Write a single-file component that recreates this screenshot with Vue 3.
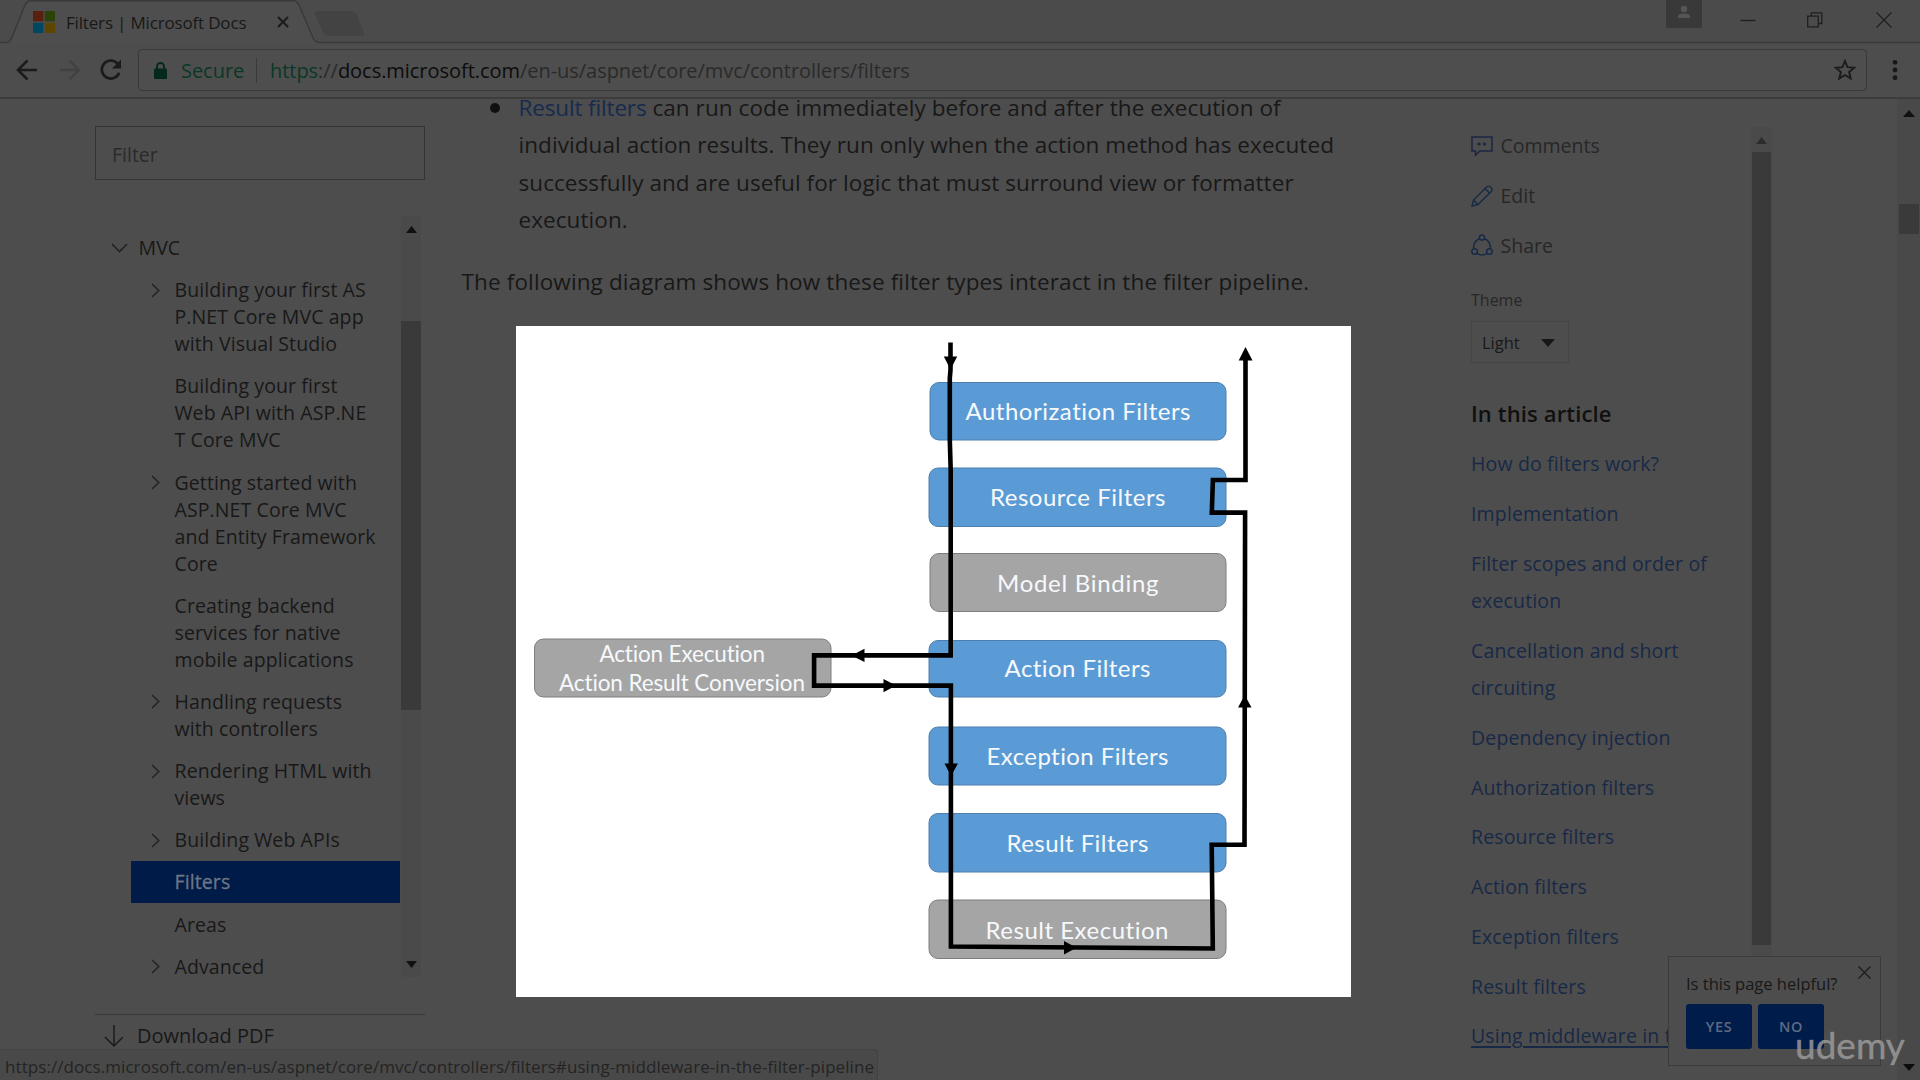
<script setup>
const tree = [
  { open: true, lines: ['Building your first AS', 'P.NET Core MVC app', 'with Visual Studio'] },
  { lines: ['Building your first', 'Web API with ASP.NE', 'T Core MVC'] },
  { open: true, lines: ['Getting started with', 'ASP.NET Core MVC', 'and Entity Framework', 'Core'] },
  { lines: ['Creating backend', 'services for native', 'mobile applications'] },
  { open: true, lines: ['Handling requests', 'with controllers'] },
  { open: true, lines: ['Rendering HTML with', 'views'] },
  { open: true, lines: ['Building Web APIs'] },
  { active: true, lines: ['Filters'] },
  { lines: ['Areas'] },
  { open: true, lines: ['Advanced'] },
]

const paragraph = [
  'individual action results. They run only when the action method has executed',
  'successfully and are useful for logic that must surround view or formatter',
  'execution.',
]

const toc = [
  ['How do filters work?'],
  ['Implementation'],
  ['Filter scopes and order of', 'execution'],
  ['Cancellation and short', 'circuiting'],
  ['Dependency injection'],
  ['Authorization filters'],
  ['Resource filters'],
  ['Action filters'],
  ['Exception filters'],
  ['Result filters'],
  ['Using middleware in the'],
]

const stages = [
  { x: 930.5, y: 382.5, w: 296, h: 57.5, tx: 966, ty: 420, tw: 225, text: 'Authorization Filters' },
  { x: 929.5, y: 468, w: 297, h: 58.5, tx: 990.5, ty: 506, tw: 175.5, text: 'Resource Filters' },
  { x: 930.5, y: 553.5, w: 296, h: 58, tx: 997.5, ty: 591.5, tw: 161.5, text: 'Model Binding', grey: true },
  { x: 929.5, y: 640.5, w: 297, h: 56.5, tx: 1005, ty: 677, tw: 146, text: 'Action Filters' },
  { x: 929.5, y: 727, w: 297, h: 58, tx: 987, ty: 765, tw: 182, text: 'Exception Filters' },
  { x: 929.5, y: 813.5, w: 297, h: 58.5, tx: 1007, ty: 852, tw: 142, text: 'Result Filters' },
  { x: 929.5, y: 900, w: 297, h: 58.5, tx: 986, ty: 939, tw: 183, text: 'Result Execution', grey: true },
]
</script>

<template>
  <div class="window">
    <header class="tabstrip">
      <svg class="tabshape" width="1920" height="44" viewBox="0 0 1920 44">
        <path d="M0 43H8C11 43 12 40 13 37L26 5Q28 1 32 1H293Q297 1 299 5L313 38Q315 43 320 43H1920V44H0Z" fill="#4e4e4e" />
        <path d="M0 42.5H6C10 42.5 11 40 12 37L25 5Q27 .8 31 .8H293Q297 .8 299 5L313 38Q315 42.5 320 42.5H1920" fill="none" stroke="#393939" stroke-width="1.4" />
        <path d="M318 11H350Q355 11 357 15L364 33Q365 36 361 36H329Q325 36 323 32L315 14Q314 11 318 11Z" fill="#434343" />
      </svg>
      <div class="tab">
        <svg width="22" height="22" viewBox="0 0 22 22">
          <path d="M0 0H10.4V10.4H0Z" fill="#59200f" /><path d="M11.8 0H22V10.4H11.8Z" fill="#2c4206" />
          <path d="M0 11.8H10.4V22H0Z" fill="#004762" /><path d="M11.8 11.8H22V22H11.8Z" fill="#5f4600" />
        </svg>
        <span class="tabtitle">Filters | Microsoft Docs</span>
        <svg class="tabclose" width="12" height="12" viewBox="0 0 12 12"><path d="M1 1L11 11M11 1L1 11" stroke="#1b1b1b" stroke-width="2" /></svg>
      </div>
      <div class="controls">
        <span class="user">
          <svg width="36" height="28" viewBox="0 0 36 28"><circle cx="18" cy="9" r="3.2" fill="#555" /><path d="M12 18V16.5Q12 13.5 18 13.5T24 16.5V18Z" fill="#555" /></svg>
        </span>
        <svg class="min" width="16" height="16" viewBox="0 0 16 16"><path d="M.5 8.5H15.5" stroke="#1f1f1f" stroke-width="1.3" /></svg>
        <svg class="restore" width="16" height="16" viewBox="0 0 16 16"><path d="M.7 4.2H11.3V14.8H.7ZM4.3 4V.8H14.8V11.5H11.5" fill="none" stroke="#1f1f1f" stroke-width="1.3" /></svg>
        <svg class="close" width="16" height="16" viewBox="0 0 16 16"><path d="M.5 .5L15.5 15.5M15.5 .5L.5 15.5" stroke="#1f1f1f" stroke-width="1.3" /></svg>
      </div>
    </header>

    <div class="toolbar">
      <svg class="back" width="22" height="22" viewBox="0 0 22 22"><path d="M21 11H2.5M11.5 1.5L2 11L11.5 20.5" fill="none" stroke="#1b1b1b" stroke-width="2.6" /></svg>
      <svg class="forward" width="22" height="22" viewBox="0 0 22 22"><path d="M1 11H19.5M10.5 1.5L20 11L10.5 20.5" fill="none" stroke="#414141" stroke-width="2.4" /></svg>
      <svg class="reload" width="24" height="24" viewBox="0 0 24 24"><path d="M20.2 14.8A9 9 0 1 1 18.6 5.6" fill="none" stroke="#1b1b1b" stroke-width="2.7" /><path d="M22 1.5V10.5H13Z" fill="#1b1b1b" /></svg>
      <div class="omnibox">
        <svg class="lock" width="13" height="17" viewBox="0 0 13 17"><path d="M3 7V4.5A3.5 3.5 0 0 1 10 4.5V7" fill="none" stroke="#04291a" stroke-width="1.9" /><rect y="6.5" width="13" height="10.5" rx="1" fill="#04291a" /></svg>
        <span class="secure">Secure</span>
        <i class="bar"></i>
        <span class="url"><em>https</em><s>://</s><b>docs.microsoft.com</b><s>/en-us/aspnet/core/mvc/controllers/filters</s></span>
        <svg class="star" width="22" height="22" viewBox="0 0 22 22"><path d="M11 2L13.5 8.2L20.2 8.7L15.1 13L16.7 19.5L11 16L5.3 19.5L6.9 13L1.8 8.7L8.5 8.2Z" fill="none" stroke="#1b1b1b" stroke-width="1.9" /></svg>
      </div>
      <svg class="menu" width="6" height="22" viewBox="0 0 6 22"><circle cx="3" cy="3.3" r="2.4" /><circle cx="3" cy="11" r="2.4" /><circle cx="3" cy="18.7" r="2.4" /></svg>
    </div>

    <div class="page">
      <nav class="side">
        <div class="filter">Filter</div>
        <div class="treebox">
          <ul class="tree">
            <li class="root">
              <svg class="down" width="17" height="10" viewBox="0 0 17 10"><path d="M1 1L8.5 8.5L16 1" fill="none" stroke="#232323" stroke-width="1.6" /></svg>
              MVC
            </li>
            <li v-for="n in tree" :key="n.lines[0]" :class="{ active: n.active }">
              <svg v-if="n.open" class="right" width="9" height="15" viewBox="0 0 9 15"><path d="M1 1L7.8 7.5L1 14" fill="none" stroke="#232323" stroke-width="1.5" /></svg>
              <span v-for="l in n.lines" :key="l">{{ l }}</span>
            </li>
          </ul>
          <div class="scroll">
            <svg width="11" height="7" viewBox="0 0 11 7"><path d="M0 7L5.5 0L11 7Z" fill="#111" /></svg>
            <i class="thumb"></i>
            <svg width="11" height="7" viewBox="0 0 11 7"><path d="M0 0L5.5 7L11 0Z" fill="#111" /></svg>
          </div>
        </div>
        <div class="pdf">
          <svg width="20" height="22" viewBox="0 0 20 22"><path d="M10 0V20.5M1 12L10 21L19 12" fill="none" stroke="#1c1c1c" stroke-width="1.5" /></svg>
          <span>Download PDF</span>
        </div>
      </nav>

      <main class="article">
        <div class="bullet">
          <i></i>
          <p>
            <span><a>Result filters</a> can run code immediately before and after the execution of</span>
            <span v-for="l in paragraph" :key="l">{{ l }}</span>
          </p>
        </div>
        <p class="lead">The following diagram shows how these filter types interact in the filter pipeline.</p>
        <svg class="figure" width="835" height="671" viewBox="516.5 326 835 671">
          <rect x="516.5" y="326" width="835" height="671" fill="#fff" />
          <g v-for="s in stages" :key="s.text">
            <rect :x="s.x" :y="s.y" :width="s.w" :height="s.h" rx="9" :fill="s.grey ? '#a5a5a5' : '#5b9bd5'" :stroke="s.grey ? '#7d7d7d' : '#4c7fae'" />
            <text :x="s.tx" :y="s.ty" :textLength="s.tw">{{ s.text }}</text>
          </g>
          <rect x="535" y="639" width="296.5" height="58" rx="9" fill="#a5a5a5" stroke="#7d7d7d" />
          <text class="small" x="600" y="662" textLength="165.5">Action Execution</text>
          <text class="small" x="559.5" y="691" textLength="246">Action Result Conversion</text>
          <path class="flow" d="M951 342.5V370L950.3 378V440L951.2 470V655.4H814.6V685.6H951.4V946.5L1213.3 948.5L1212.2 844.7H1245L1245.6 512.6H1212.3L1213.4 480H1246V356" />
          <path d="M944.3 356.5H957.7L951 369.5ZM865 648.7V662L852 655.4ZM884 679V692.3L896.5 685.6ZM945 763.5H958.4L951.6 776ZM1238.6 707.5H1252L1245.2 695ZM1239.2 360.5H1253L1246 347ZM1064.5 941V954.5L1077 947.7Z" />
        </svg>
      </main>

      <aside class="aside">
        <div class="panel">
          <div class="action">
            <svg width="22" height="22" viewBox="0 0 22 22"><path d="M1 2H21V16H9L4.5 20V16H1Z" fill="none" stroke="#1b2444" stroke-width="1.5" /><circle cx="8" cy="9" r="1.6" fill="#1b2444" /><circle cx="13.5" cy="9" r="1.6" fill="#1b2444" /></svg>
            Comments
          </div>
          <div class="action">
            <svg width="22" height="22" viewBox="0 0 22 22"><path d="M1 21L2.5 15L15.5 2Q17.5 .2 20 2.2Q22 4.5 20 6.7L7 19.5ZM2.5 15L7 19.5M14 3.5L18.5 8" fill="none" stroke="#182a48" stroke-width="1.4" /></svg>
            Edit
          </div>
          <div class="action">
            <svg width="22" height="22" viewBox="0 0 22 22" fill="none" stroke="#182a48" stroke-width="1.5"><circle cx="11" cy="3.5" r="2.6" /><circle cx="3.6" cy="17.5" r="2.8" /><circle cx="18.4" cy="17.5" r="2.8" /><path d="M8.6 4.5Q2.5 7 2.5 14.7M13.4 4.5Q19.5 7 19.5 14.7M6 19.3Q11 22.8 16 19.3" /></svg>
            Share
          </div>
          <div class="theme">Theme</div>
          <div class="select">Light<svg width="14" height="8" viewBox="0 0 14 8"><path d="M0 0H14L7 8Z" fill="#171717" /></svg></div>
          <h2>In this article</h2>
          <ul class="toc">
            <li v-for="(t, i) in toc" :key="t[0]" :class="{ hover: i === toc.length - 1 }"><span v-for="l in t" :key="l">{{ l }}</span></li>
          </ul>
        </div>
        <div class="scroll outer">
          <svg width="11" height="7" viewBox="0 0 11 7"><path d="M0 7L5.5 0L11 7Z" fill="#2c2c2c" /></svg>
          <i class="thumb"></i>
        </div>
      </aside>

      <div class="pagescroll">
        <svg width="12" height="7" viewBox="0 0 12 7"><path d="M0 7L6 0L12 7Z" fill="#111" /></svg>
        <i class="thumb"></i>
        <svg class="end" width="12" height="7" viewBox="0 0 12 7"><path d="M0 0L6 7L12 0Z" fill="#0c0c0c" /></svg>
      </div>
    </div>

    <div class="status">https://docs.microsoft.com/en-us/aspnet/core/mvc/controllers/filters#using-middleware-in-the-filter-pipeline</div>

    <div class="helpful">
      <div class="question">Is this page helpful?</div>
      <svg class="x" width="13" height="13" viewBox="0 0 13 13"><path d="M.5 .5L12.5 12.5M12.5 .5L.5 12.5" stroke="#1c1c1c" stroke-width="1.3" /></svg>
      <div class="buttons"><button>YES</button><button>NO</button></div>
    </div>
    <div class="brand">udemy</div>
  </div>
</template>

<style>
body { margin: 0; background: #4d4d4d; overflow: hidden; }
</style>

<style scoped>
.window { position: relative; display: flex; flex-direction: column; width: 1920px; height: 1080px; overflow: hidden; background: #4d4d4d; color: #181818; font-family: "Open Sans", "Noto Sans", sans-serif; font-size: 19.5px; white-space: nowrap; }
ul, p, h2 { margin: 0; padding: 0; list-style: none; }
svg { flex: none; display: block; }
.tabstrip { position: relative; display: flex; justify-content: space-between; height: 43px; background: #4b4b4b; }
.tabshape { position: absolute; left: 0; top: 0; }
.tab { position: relative; display: flex; align-items: center; height: 44px; padding-left: 33px; }
.tabtitle { width: 198px; margin-left: 11px; font-size: 17px; letter-spacing: -0.17px; }
.tabclose { margin-left: 13px; }
.controls { position: relative; display: flex; align-items: flex-start; padding-right: 28px; }
.user { background: #393939; height: 28px; }
.min { margin: 12px 0 0 38px; }
.restore { margin: 12px 0 0 51px; }
.close { margin: 12px 0 0 53px; }
.toolbar { display: flex; align-items: center; box-sizing: border-box; height: 56px; padding: 0 0 0 16px; border-bottom: 2px solid #3c3c3c; background: #4d4d4d; }
.forward { margin-left: 21px; }
.reload { margin-left: 18px; }
.omnibox { display: flex; align-items: center; box-sizing: border-box; width: 1729px; height: 42px; margin-left: 15px; padding-left: 15px; border: 1.5px solid #393939; border-radius: 4px; background: #4e4e4e; }
.secure { width: 61px; margin-left: 14px; color: #0a3826; }
.bar { width: 1px; height: 25px; margin: 0 13px 0 14px; background: #3a3a3a; }
.url { flex: 1; }
.secure, .url { padding-top: 1px; font-size: 20px; letter-spacing: -0.04px; }
.url em { font-style: normal; color: #0a3826; }
.url s { text-decoration: none; color: #2a2a2a; }
.url b { font-weight: 400; color: #0c0c0c; }
.star { margin-right: 10px; }
.menu { margin-left: 25px; fill: #181818; }
.page { display: flex; height: 981px; overflow: hidden; }
.side { width: 330px; margin-left: 95px; }
.filter { box-sizing: border-box; height: 54px; margin-top: 27px; padding-left: 16px; border: 1.5px solid #353535; line-height: 55px; color: #2a2a2a; }
.treebox { display: flex; justify-content: space-between; height: 761px; margin-top: 36px; padding-right: 4px; }
.tree { width: 305px; padding-top: 10.4px; line-height: 27px; letter-spacing: 0.1px; }
.tree li { position: relative; margin-left: 35.5px; padding: 7.6px 0 7.6px 44px; }
.tree li.root { margin-left: 0; padding-left: 43.5px; }
.tree span { display: block; }
.down { position: absolute; left: 16px; top: 17px; }
.right { position: absolute; left: 20.5px; top: 14px; }
.tree li.active { background: #001b47; color: #6b7686; -webkit-text-stroke: 0.3px #6b7686; }
.scroll { display: flex; flex-direction: column; align-items: center; width: 20px; box-sizing: border-box; padding: 10px 0 9px; background: #4a4a4a; }
.scroll .thumb { width: 100%; height: 389px; margin: 88px 0 auto; background: #3a3a3a; }
.pdf { display: flex; align-items: center; height: 41px; margin-top: 37px; padding-left: 9px; border-top: 1.5px solid #393939; font-size: 20px; }
.pdf span { margin-left: 13px; }
.article { width: 891px; margin-left: 36px; font-size: 22.5px; line-height: 37.5px; letter-spacing: 0.07px; }
.bullet { display: flex; height: 150px; margin-top: -10.4px; padding-left: 29px; }
.bullet i { width: 10px; height: 10px; margin: 14.5px 18.5px 0 0; border-radius: 50%; background: #101010; }
.bullet span { display: block; }
.article a { color: #172b4e; letter-spacing: -0.15px; }
.lead { margin-top: 24.3px; padding-left: 0.6px; letter-spacing: 0.12px; }
.figure { margin: 25.6px 0 0 55px; }
.figure text { fill: #f6f9fc; font: 24px Lato, "Open Sans", sans-serif; font-variant-ligatures: none; letter-spacing: 0; }
.figure .small { font-size: 22.5px; }
.flow { fill: none; stroke: #000; stroke-width: 4.6; }
.aside { display: flex; margin-left: 119px; }
.panel { width: 280px; padding-top: 22px; }
.action { display: flex; align-items: center; height: 49.7px; color: #272727; }
.action svg { margin-right: 7.5px; }
.theme { height: 24px; margin-top: 18px; font-size: 16px; line-height: 24px; color: #272727; }
.select { display: flex; align-items: center; box-sizing: border-box; width: 98px; height: 42px; margin-top: 9px; padding: 1.5px 0 0 10px; border: 1px solid #454545; font-size: 16.5px; }
.select svg { margin-left: 21px; }
h2 { height: 30px; margin: 35.3px 0 17px; font-size: 22px; font-weight: 600; line-height: 30px; letter-spacing: 0.14px; color: #101010; }
.toc { letter-spacing: 0.15px; }
.toc li { margin-bottom: 12.2px; line-height: 37.5px; color: #182947; }
.toc span { display: block; }
.toc .hover span { text-decoration: underline; text-underline-offset: 3px; text-decoration-thickness: 1.5px; }
.outer { width: 21px; height: 860px; margin-top: 28px; }
.outer .thumb { width: 19.5px; height: 793px; margin-top: 8px; }
.pagescroll { display: flex; flex-direction: column; align-items: center; width: 23px; margin-left: auto; padding-top: 11px; box-sizing: border-box; background: #494949; }
.pagescroll .thumb { width: 20px; height: 30px; margin-top: 87px; background: #3a3a3a; }
.pagescroll .end { margin: auto 0 9px; }
.status { position: absolute; left: 0; top: 1049px; box-sizing: border-box; width: 878px; height: 31px; padding-left: 5px; border: 1px solid #424242; border-left: 0; border-bottom: 0; border-top-right-radius: 4px; background: #494949; color: #242424; font-size: 17px; line-height: 33px; letter-spacing: 0.07px; }
.helpful { position: absolute; left: 1668px; top: 956px; box-sizing: border-box; width: 213px; height: 110px; padding: 14px 17px; border: 1.5px solid #3b3b3b; background: #4d4d4d; }
.question { height: 27px; font-size: 16.5px; line-height: 26px; }
.x { position: absolute; right: 9px; top: 8.5px; }
.buttons { display: flex; gap: 6px; margin-top: 6px; }
.buttons button { width: 66px; height: 45px; padding: 0; border: 0; border-radius: 3px; background: #001c4a; color: #5d6b82; font: 600 14.5px "Open Sans", sans-serif; letter-spacing: 0.6px; }
.brand { position: absolute; left: 1795px; top: 1020px; color: rgba(160, 160, 160, 0.8); font: 400 37px/50px Lato, sans-serif; -webkit-text-stroke: 0.5px rgba(160, 160, 160, 0.6); }
</style>
